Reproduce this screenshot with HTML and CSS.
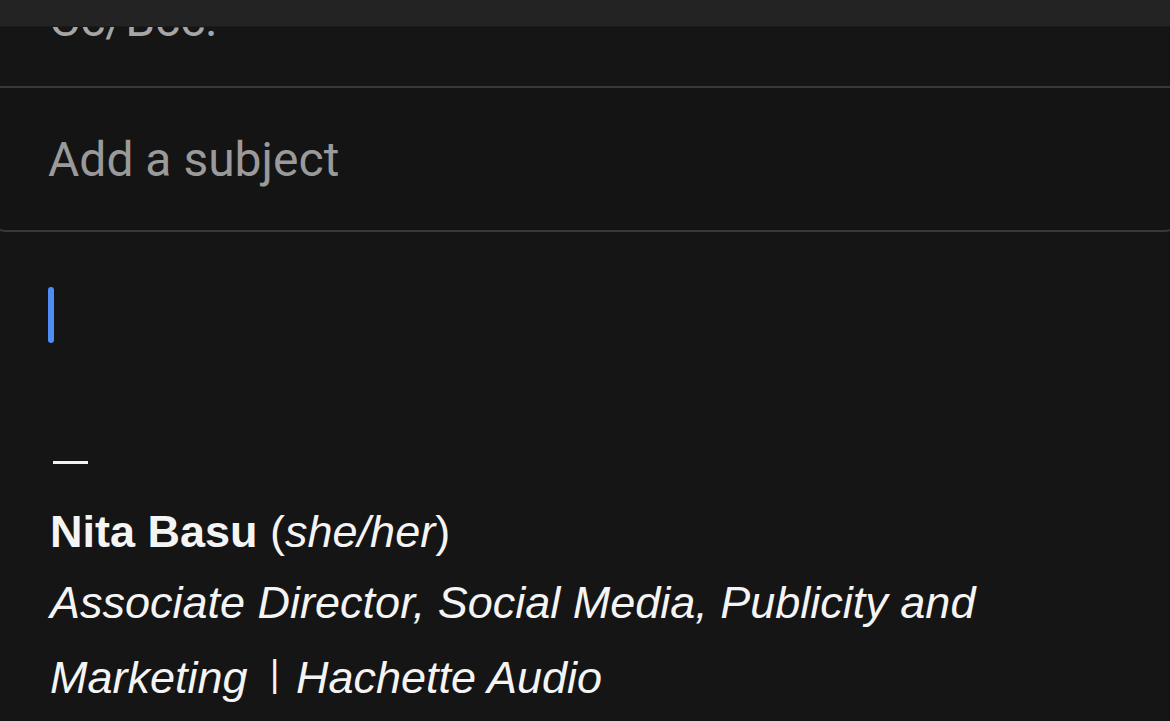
FILE: index.html
```html
<!DOCTYPE html>
<html>
<head>
<meta charset="utf-8">
<link rel="stylesheet" href="styles.css">
</head>
<body>
<div class="screen">
  <div class="topbar"></div>
  <div class="cc-row"><span class="cc-label">Cc/Bcc:</span></div>
  <div class="subject-box"><span class="placeholder">Add a subject</span></div>
  <div class="compose">
    <div class="caret-line"><span class="caret"></span></div>
    <div class="signature">
      <div class="dash"></div>
      <p class="sig-line name"><b>Nita Basu</b> (<i>she/her</i>)</p>
      <p class="sig-line title"><i>Associate Director, Social Media, Publicity and Marketing</i> <span class="sep">|</span> <i>Hachette Audio</i></p>
    </div>
  </div>
</div>
</body>
</html>
```
FILE: styles.css
```css
html, body {
  margin: 0;
  padding: 0;
  background: #151515;
}
.screen {
  width: 1170px;
  height: 721px;
  overflow: hidden;
  display: flex;
  flex-direction: column;
  background: #151515;
}
.topbar {
  height: 26px;
  flex: none;
  background: #232323;
  border-bottom: 1px solid #1b1b1b;
  position: relative;
  z-index: 2;
}
.cc-row {
  height: 59px;
  flex: none;
  overflow: hidden;
  padding-left: 49px;
}
.cc-label {
  display: block;
  margin-top: -37px;
  font-family: Roboto, "Noto Sans", sans-serif;
  font-size: 48px;
  line-height: 60px;
  color: #a6a6a6;
}
.subject-box {
  flex: none;
  margin: 0 -12px;
  border: 2px solid #383838;
  border-top-left-radius: 0;
  border-top-right-radius: 0;
  border-bottom-left-radius: 18px;
  border-bottom-right-radius: 18px;
  padding: 42px 0 40px 58px;
  background: #141414;
}
.placeholder {
  display: block;
  font-family: Roboto, "Noto Sans", sans-serif;
  font-size: 48px;
  line-height: 60px;
  color: #9a9a9a;
}
.compose {
  padding-left: 48px;
  padding-right: 80px;
}
.caret-line {
  padding-top: 55px;
  height: 56px;
}
.caret {
  display: block;
  width: 6px;
  height: 56px;
  border-radius: 3px;
  background: #4f8cf3;
}
.signature {
  padding-top: 118px;
  font-family: "Liberation Sans", Arial, sans-serif;
  font-size: 45px;
  line-height: 71px;
  color: #f4f4f4;
}
.dash {
  width: 35px;
  height: 3px;
  margin-left: 5px;
  background: #f2f2f2;
  margin-bottom: 32px;
}
.sig-line {
  margin: 0;
  padding-left: 2px;
}
.name b {
  font-weight: bold;
}
.title {
  max-width: 1040px;
}
.sep {
  font-size: 36px;
  vertical-align: 7px;
  padding: 0 4px 0 10px;
}
```
